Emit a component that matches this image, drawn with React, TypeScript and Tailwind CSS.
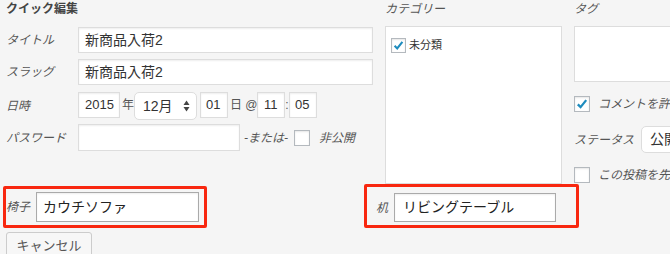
import React from "react";

const inputBase =
  "h-[26px] bg-white border border-[#ddd] shadow-[inset_0_1px_2px_rgba(0,0,0,0.07)] text-[#333] flex items-center";

function Check({ checked = false, size = 16 }: { checked?: boolean; size?: number }) {
  return (
    <span
      className="flex-none bg-white border border-[#b4b9be] shadow-[inset_0_1px_2px_rgba(0,0,0,0.1)] flex items-center justify-center"
      style={{ width: size, height: size }}
    >
      {checked && (
        <svg viewBox="0 0 16 16" width={size} height={size}>
          <path d="M3.2 8.4 L6.4 11.6 L12.8 3.6" fill="none" stroke="#1e8cbe" strokeWidth="2.6" />
        </svg>
      )}
    </span>
  );
}

function Label({ children, w }: { children: React.ReactNode; w: string }) {
  return <span className={`${w} flex-none italic text-[12px] text-[#555]`}>{children}</span>;
}

function Heading({ children }: { children: React.ReactNode }) {
  return <div className="mt-[2px] h-[16px] leading-[14px] italic text-[12px] text-[#555]">{children}</div>;
}

export default function App() {
  return (
    <div className="w-[670px] h-[254px] overflow-hidden bg-[#f5f5f5] whitespace-nowrap font-['Liberation_Sans','Noto_Sans_CJK_JP',sans-serif]">
      {/* top row: three columns */}
      <div className="flex items-start">
        <div className="w-[385px] flex-none pl-[6px]">
          <div className="mt-[2px] h-[16px] leading-[14px] font-bold text-[12px] text-[#444]">クイック編集</div>

          <div className="mt-[9px] flex items-center">
            <Label w="w-[72px]">タイトル</Label>
            <div className={`${inputBase} w-[295px] pl-[6px] text-[14px] border-[#5b9dd9] shadow-[0_0_2px_rgba(30,140,190,0.8)]`}>
              新商品入荷2
            </div>
          </div>

          <div className="mt-[6px] flex items-center">
            <Label w="w-[72px]">スラッグ</Label>
            <div className={`${inputBase} w-[295px] pl-[6px] text-[14px]`}>新商品入荷2</div>
          </div>

          <div className="mt-[7px] flex items-start text-[13px] text-[#333]">
            <Label w="w-[72px] mt-[5px]">日時</Label>
            <div className={`${inputBase} w-[42px] pl-[6px]`}>2015</div>
            <span className="ml-[2px] w-[12px] text-[12px] text-[#555] mt-[4px]">年</span>
            <div className="ml-0 w-[63px] h-[28px] bg-white border border-[#ddd] rounded-[5px] flex items-center pl-[8px] pr-[6px] text-[14px] text-[#333]">
              <span className="flex-1">12月</span>
              <svg width="7" height="12" viewBox="0 0 7 12">
                <path d="M3.5 0.5 L6.5 5 L0.5 5 Z" fill="#444" />
                <path d="M3.5 11.5 L6.5 7 L0.5 7 Z" fill="#444" />
              </svg>
            </div>
            <div className={`${inputBase} ml-[3px] w-[28px] pl-[5px]`}>01</div>
            <span className="ml-[2px] w-[27px] text-[12px] text-[#555] mt-[4px]">日 @</span>
            <div className={`${inputBase} w-[28px] pl-[6px]`}>11</div>
            <span className="w-[4px] text-center text-[12px] text-[#555] mt-[4px]">:</span>
            <div className={`${inputBase} w-[28px] pl-[5px]`}>05</div>
          </div>

          <div className="mt-[4px] flex items-center">
            <Label w="w-[72px]">パスワード</Label>
            <div className={`${inputBase} w-[162px] h-[27px]`} />
            <span className="ml-[4px] italic text-[12px] text-[#555]">-または-</span>
            <span className="ml-[6px]">
              <Check />
            </span>
            <span className="ml-[9px] italic text-[12px] text-[#555]">非公開</span>
          </div>
        </div>

        <div className="w-[177px] flex-none">
          <Heading>カテゴリー</Heading>
          <div className="mt-[8px] h-[158px] bg-white border border-[#ddd] pt-[10px] pl-[5px]">
            <div className="flex items-center">
              <Check checked size={15} />
              <span className="ml-[3px] text-[11px] text-[#333]">未分類</span>
            </div>
          </div>
        </div>

        <div className="ml-[12px] w-[220px] flex-none">
          <Heading>タグ</Heading>
          <div className="mt-[8px] h-[56px] w-[220px] bg-white border border-[#ddd]" />
          <div className="mt-[13px] flex items-center">
            <Check checked />
            <span className="ml-[8px] italic text-[12px] text-[#555]">コメントを許可</span>
          </div>
          <div className="mt-[13px] flex items-center">
            <Label w="w-[67px]">ステータス</Label>
            <div className="h-[27px] w-[120px] bg-white border border-[#ddd] rounded-[5px] flex items-center pl-[8px] text-[14px] text-[#333]">
              公開済み
            </div>
          </div>
          <div className="mt-[13px] flex items-center">
            <Check />
            <span className="ml-[8px] italic text-[12px] text-[#555]">この投稿を先頭に固定表示</span>
          </div>
        </div>
      </div>

      {/* custom fields row */}
      <div className="flex items-start">
        <div className="ml-[3px] mt-[2px] w-[204px] h-[42px] border-[3px] border-[#f8270f] rounded-[2px] flex items-center pr-[5px]">
          <Label w="w-[30px]">椅子</Label>
          <div className="h-[30px] w-[163px] bg-white border border-[#aaa] shadow-[inset_0_1px_2px_rgba(0,0,0,0.07)] flex items-center pl-[6px] text-[14px] text-[#222]">
            カウチソファ
          </div>
        </div>
        <div className="ml-[157px] w-[215px] h-[44px] border-[3px] border-[#f8270f] rounded-[2px] flex items-start pt-[6px] pl-[9px]">
          <Label w="w-[18px] mt-[6px]">机</Label>
          <div className="h-[29px] w-[162px] bg-white border border-[#aaa] shadow-[inset_0_1px_2px_rgba(0,0,0,0.07)] flex items-center pl-[8px] text-[14px] text-[#222]">
            リビングテーブル
          </div>
        </div>
      </div>

      <div className="pl-[6px] mt-[4px]">
        <div className="w-[86px] h-[28px] bg-[#f7f7f7] border border-[#ccc] rounded-[3px] shadow-[0_1px_0_#ccc] flex items-center justify-center text-[13px] text-[#555]">
          キャンセル
        </div>
      </div>
    </div>
  );
}
